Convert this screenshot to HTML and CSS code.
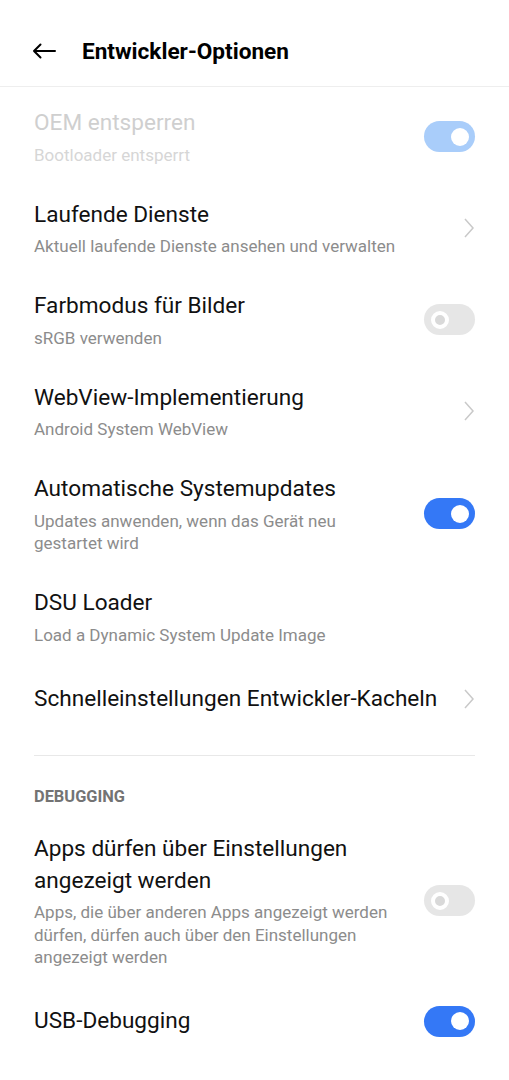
FILE: index.html
```html
<!DOCTYPE html>
<html lang="de">
<head>
<meta charset="utf-8">
<title>Entwickler-Optionen</title>
<link rel="stylesheet" href="styles.css">
</head>
<body>
<header class="appbar">
  <svg class="back" width="24" height="16" viewBox="0 0 24 16" aria-hidden="true">
    <path d="M23 8H2M8.5 1.5L2 8l6.5 6.5" fill="none" stroke="#000" stroke-width="2" stroke-linecap="round" stroke-linejoin="round"/>
  </svg>
  <h1 class="appbar-title">Entwickler-Optionen</h1>
</header>
<main class="list">
  <div class="row disabled">
    <div class="text">
      <div class="title">OEM entsperren</div>
      <div class="sub">Bootloader entsperrt</div>
    </div>
    <span class="switch on"></span>
  </div>
  <div class="row">
    <div class="text">
      <div class="title">Laufende Dienste</div>
      <div class="sub">Aktuell laufende Dienste ansehen und verwalten</div>
    </div>
    <svg class="chev" width="10" height="20" viewBox="0 0 10 20" aria-hidden="true"><path d="M1 1l8 9-8 9" fill="none" stroke="#c9c9c9" stroke-width="1.5"/></svg>
  </div>
  <div class="row">
    <div class="text">
      <div class="title">Farbmodus für Bilder</div>
      <div class="sub">sRGB verwenden</div>
    </div>
    <span class="switch off"></span>
  </div>
  <div class="row">
    <div class="text">
      <div class="title">WebView-Implementierung</div>
      <div class="sub">Android System WebView</div>
    </div>
    <svg class="chev" width="10" height="20" viewBox="0 0 10 20" aria-hidden="true"><path d="M1 1l8 9-8 9" fill="none" stroke="#c9c9c9" stroke-width="1.5"/></svg>
  </div>
  <div class="row">
    <div class="text">
      <div class="title">Automatische Systemupdates</div>
      <div class="sub">Updates anwenden, wenn das Gerät neu gestartet wird</div>
    </div>
    <span class="switch on"></span>
  </div>
  <div class="row">
    <div class="text">
      <div class="title">DSU Loader</div>
      <div class="sub">Load a Dynamic System Update Image</div>
    </div>
  </div>
  <div class="row single">
    <div class="text wide">
      <div class="title">Schnelleinstellungen Entwickler-Kacheln</div>
    </div>
    <svg class="chev" width="10" height="20" viewBox="0 0 10 20" aria-hidden="true"><path d="M1 1l8 9-8 9" fill="none" stroke="#c9c9c9" stroke-width="1.5"/></svg>
  </div>
  <hr class="divider">
  <h2 class="section">DEBUGGING</h2>
  <div class="row">
    <div class="text">
      <div class="title">Apps dürfen über Einstellungen angezeigt werden</div>
      <div class="sub">Apps, die über anderen Apps angezeigt werden dürfen, dürfen auch über den Einstellungen angezeigt werden</div>
    </div>
    <span class="switch off"></span>
  </div>
  <div class="row single">
    <div class="text">
      <div class="title">USB-Debugging</div>
    </div>
    <span class="switch on"></span>
  </div>
</main>
</body>
</html>
```

FILE: styles.css
```css
* { box-sizing: border-box; }
html, body { margin: 0; padding: 0; background: #fff; }
body {
  font-family: Roboto, "Noto Sans", "Liberation Sans", sans-serif;
  color: #000;
  width: 509px;
  overflow: hidden;
}
.appbar {
  height: 87px;
  display: flex;
  align-items: center;
  padding: 15px 0 0 32px;
  border-bottom: 1px solid #eeeeee;
}
.back { display: block; margin-right: 26px; }
.appbar-title {
  margin: 3px 0 0;
  font-size: 22.6px;
  line-height: 30px;
  font-weight: 700;
  color: #000;
}
.list { padding-top: 3px; }
.row {
  display: flex;
  align-items: center;
  padding: 17px 34px 15.5px 34px;
}
.row.single { min-height: 74px; padding-top: 0; padding-bottom: 0; }
.text { flex: 1; min-width: 0; padding-right: 24px; }
.text.wide { padding-right: 12px; }
.title {
  font-size: 22.6px;
  line-height: 32px;
  color: #111;
}
.sub {
  margin-top: 4.5px;
  font-size: 17px;
  line-height: 22.5px;
  color: #8c8c8c;
}
.disabled .title { color: #cfcfcf; }
.disabled .sub { color: #d6d6d6; }
.chev { display: block; flex: none; margin-right: 1px; }
.switch {
  flex: none;
  position: relative;
  width: 51px;
  height: 31px;
  border-radius: 16px;
  background: #e6e6e6;
}
.switch::after {
  content: "";
  position: absolute;
  top: 6.5px;
  width: 18px;
  height: 18px;
  border-radius: 50%;
  box-sizing: border-box;
}
.switch.on { background: #3478f6; }
.switch.on::after { right: 6.5px; background: #fff; }
.switch.off::after { left: 6.5px; background: #d9d9d9; border: 4px solid #fff; }
.disabled .switch.on { background: #a9cdfa; }
.divider {
  margin: 19px 34px 0;
  border: 0;
  border-top: 1px solid #e8e8e8;
  height: 0;
}
.section {
  margin: 31px 34px 9px;
  font-size: 16.4px;
  line-height: 20px;
  font-weight: 700;
  color: #737373;
}
```
